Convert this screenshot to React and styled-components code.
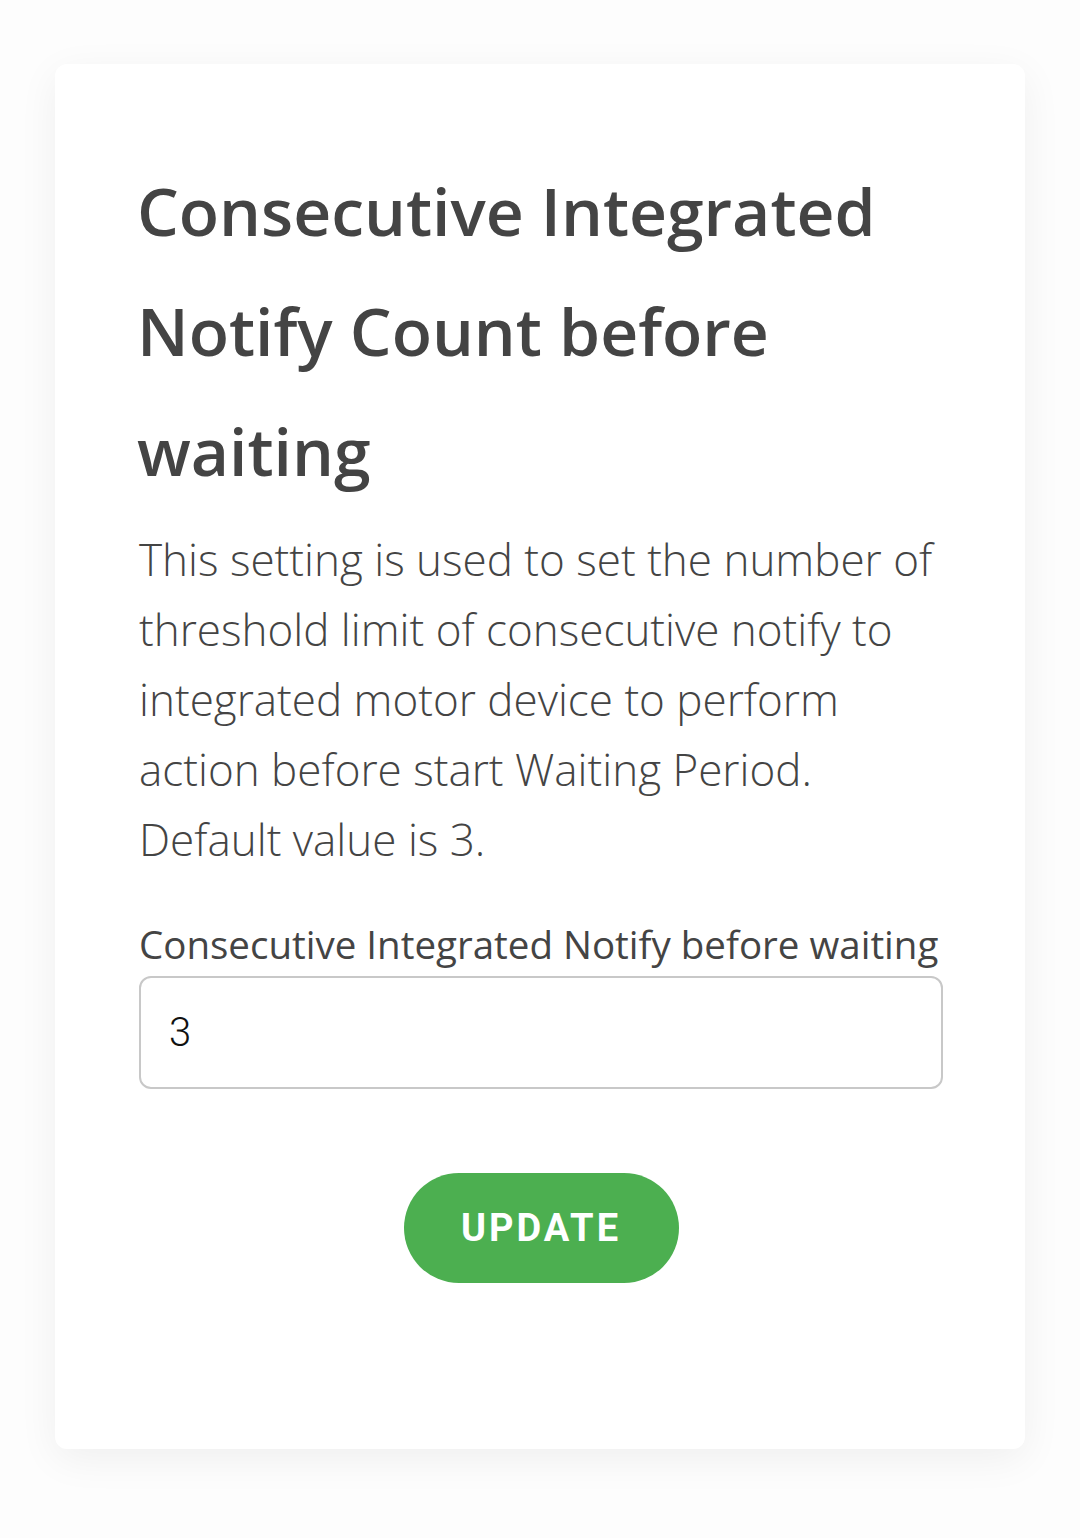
import React from 'react'
import styled, { createGlobalStyle } from 'styled-components'

const GlobalStyle = createGlobalStyle`
    html, body {
        margin: 0;
        padding: 0;
        background: #fdfdfd;
    }
    body {
        font-family: 'Open Sans', 'Liberation Sans', sans-serif;
    }
`

const Page = styled.div`
    padding: 64px 55px 90px 55px;
`

const Card = styled.div`
    background: #fff;
    border-radius: 12px;
    box-shadow: 0 10px 40px rgba(0, 0, 0, 0.06);
    padding: 86px 82px 166px 84px;
    color: #444;
`

const Title = styled.h1`
    margin: 0 0 0 -2px;
    font-size: 66px;
    font-weight: 600;
    line-height: 120px;
    color: #444;
`

const Description = styled.p`
    margin: 14px 0 40px 0;
    font-size: 44px;
    font-weight: 300;
    line-height: 70px;
    color: #444;
`

const Label = styled.label`
    display: block;
    font-size: 38.5px;
    font-weight: 400;
    line-height: 60px;
    margin-bottom: 2px;
    color: #444;
`

const Input = styled.input`
    display: block;
    box-sizing: border-box;
    width: 100%;
    height: 113px;
    border: 2px solid #c8c8c8;
    border-radius: 12px;
    padding: 0 28px;
    font-family: Roboto, 'Liberation Sans', sans-serif;
    font-size: 40px;
    font-weight: 300;
    color: #111;
    background: #fff;
    outline: none;
`

const Actions = styled.div`
    display: flex;
    justify-content: center;
    margin-top: 84px;
`

const Button = styled.button`
    width: 275px;
    height: 110px;
    border: 0;
    border-radius: 55px;
    background: #4caf50;
    color: #fff;
    font-family: Roboto, 'Liberation Sans', sans-serif;
    font-size: 38px;
    font-weight: 700;
    letter-spacing: 3px;
    text-transform: uppercase;
    cursor: pointer;
`

const App = () => {
    return (
        <Page>
            <GlobalStyle />
            <Card>
                <Title>Consecutive Integrated Notify Count before waiting</Title>
                <Description>
                    This setting is used to set the number of threshold limit of consecutive notify to
                    integrated motor device to perform action before start Waiting Period. Default value is 3.
                </Description>
                <Label htmlFor="notify-count">Consecutive Integrated Notify before waiting</Label>
                <Input id="notify-count" type="text" defaultValue="3" />
                <Actions>
                    <Button type="submit">Update</Button>
                </Actions>
            </Card>
        </Page>
    )
}

export default App
